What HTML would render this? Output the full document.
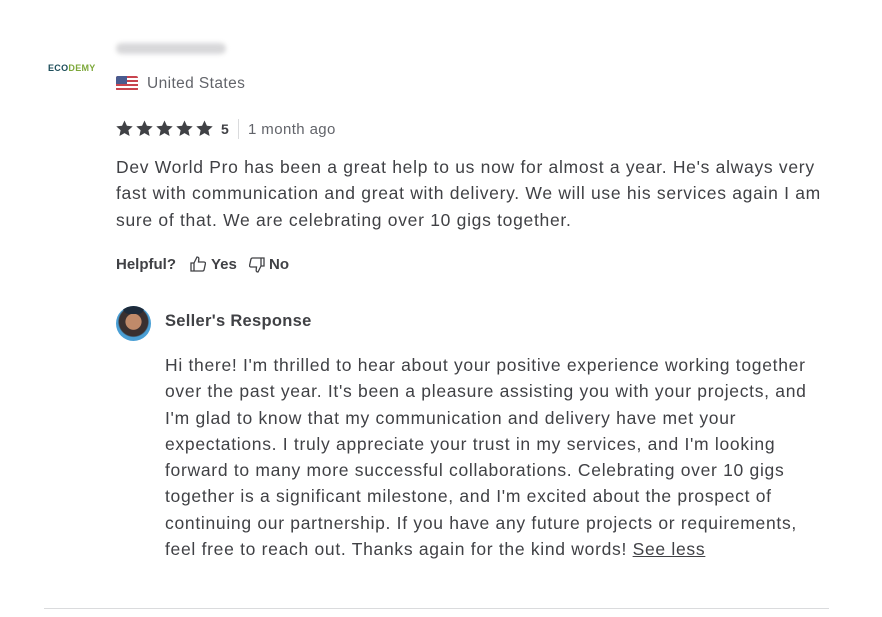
<!DOCTYPE html><html><head><style>
body{margin:0;width:882px;height:617px;background:#fff;font-family:"Liberation Sans",sans-serif;color:#404145;position:relative;overflow:hidden}
.a{position:absolute}
.t{font-size:17.5px;line-height:26.3px;color:#404145;letter-spacing:0.7px}
</style></head><body>
<div class="a" style="left:48px;top:63px;font-size:9px;font-weight:bold;letter-spacing:0.3px;color:#1d4d5a">ECO<span style="color:#7da83a">DEMY</span></div>
<div class="a" style="left:116px;top:43px;width:110px;height:11px;background:#d8d8da;border-radius:6px;filter:blur(2.5px)"></div>
<div class="a" style="left:116px;top:76px;width:22px;height:15px;border-radius:2px;overflow:hidden;background:repeating-linear-gradient(#c8444e 0 2px,#fff 2px 4px)"><div style="width:11px;height:8px;background:#4a5b8f"></div></div>
<div class="a" style="left:147px;top:75px;font-size:15.5px;color:#62646a;letter-spacing:0.4px">United States</div>
<svg class="a" style="left:116px;top:120px" width="100" height="18" viewBox="0 0 100 18" fill="#404145">
<g id="s"><path d="M8.5 0.5l2.4 5.3 5.8.6-4.3 3.9 1.2 5.7-5.1-2.9-5.1 2.9 1.2-5.7L0.3 6.4l5.8-.6z"/></g>
<use href="#s" x="20"/><use href="#s" x="40"/><use href="#s" x="60"/><use href="#s" x="80"/></svg>
<div class="a" style="left:221px;top:121px;font-size:14px;font-weight:bold">5</div>
<div class="a" style="left:238px;top:119px;width:1px;height:20px;background:#dadbdd"></div>
<div class="a" style="left:248px;top:121px;font-size:15px;color:#62646a;letter-spacing:0.4px">1 month ago</div>
<div class="a t" style="left:116px;top:154px;width:720px">Dev World Pro has been a great help to us now for almost a year. He's always very fast with communication and great with delivery. We will use his services again I am sure of that. We are celebrating over 10 gigs together.</div>
<div class="a" style="left:116px;top:256px;font-size:15px;font-weight:bold">Helpful?</div>
<svg class="a" style="left:190px;top:256px" width="16" height="16" viewBox="0 0 16 16" fill="none" stroke="#404145" stroke-width="1.3"><path d="M1 7h3v8H1zM4 7l3-6c1.5 0 2 1 1.8 2.3L8.5 6H14c1 0 1.6.8 1.4 1.7l-1.3 6c-.2.8-.8 1.3-1.6 1.3H4"/></svg>
<div class="a" style="left:211px;top:256px;font-size:15px;font-weight:bold">Yes</div>
<svg class="a" style="left:249px;top:257px" width="16" height="16" viewBox="0 0 16 16" fill="none" stroke="#404145" stroke-width="1.3"><path d="M15 9h-3V1h3zM12 9l-3 6c-1.5 0-2-1-1.8-2.3L7.5 10H2c-1 0-1.6-.8-1.4-1.7l1.3-6C2.1 1.5 2.7 1 3.5 1H12"/></svg>
<div class="a" style="left:269px;top:256px;font-size:15px;font-weight:bold">No</div>
<div class="a" style="left:116px;top:306px;width:35px;height:35px;border-radius:50%;background:radial-gradient(circle at 50% 45%,#c08a6a 0 30%,#3a3030 32% 55%,#4a9fd5 60%);overflow:hidden"><div style="position:absolute;left:7px;top:0;width:21px;height:8px;background:#1d2a3a;border-radius:0 0 6px 6px"></div></div>
<div class="a" style="left:165px;top:312px;font-size:16.5px;font-weight:bold;letter-spacing:0.3px">Seller's Response</div>
<div class="a t" style="left:165px;top:352px;width:665px">Hi there! I'm thrilled to hear about your positive experience working together over the past year. It's been a pleasure assisting you with your projects, and I'm glad to know that my communication and delivery have met your expectations. I truly appreciate your trust in my services, and I'm looking forward to many more successful collaborations. Celebrating over 10 gigs together is a significant milestone, and I'm excited about the prospect of continuing our partnership. If you have any future projects or requirements, feel free to reach out. Thanks again for the kind words! <u>See less</u></div>
<div class="a" style="left:44px;top:608px;width:785px;height:1px;background:#dadbdd"></div>
</body></html>
